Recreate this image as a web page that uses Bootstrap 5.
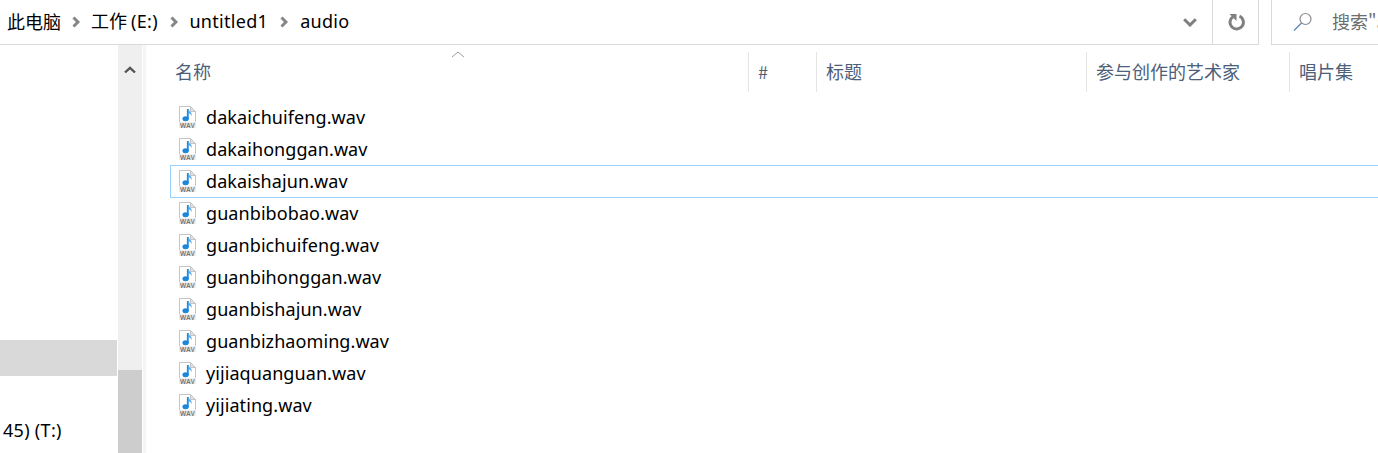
<!DOCTYPE html>
<html lang="zh-CN">
<head>
  <meta charset="UTF-8">
  <title>audio</title>
  <link href="https://cdn.jsdelivr.net/npm/bootstrap@5.3.3/dist/css/bootstrap.min.css" rel="stylesheet">
  <style>
    html, body { height: 453px; overflow: hidden; }
    body { background: #fff; color: #000; font-family: "Noto Sans CJK SC", sans-serif; font-size: 18px; line-height: 24px; }
    .latin { font-family: "Noto Sans", "Noto Sans CJK SC", sans-serif; letter-spacing: .08px; }
    .wide { letter-spacing: .3px; }
    .topbar { height: 45px; }
    .addr { width: 1259px; flex: none; border-right: 1px solid #d9d9d9; border-bottom: 1px solid #d9d9d9; }
    .crumbs { padding-left: 7px; padding-bottom: 3px; }
    .sep { width: 30px; padding-top: 3px; }
    .sep-b { width: 31.5px; }
    .sep-c { width: 32px; }
    .addr-btn { height: 44px; }
    .drop { width: 46px; border-right: 1px solid #d9d9d9; }
    .refresh { width: 45px; }
    .gapper { width: 12px; flex: none; }
    .searchbox { min-width: 0; border-left: 1px solid #d9d9d9; border-bottom: 1px solid #d9d9d9; color: #6d6d6d; padding-left: 20px; white-space: nowrap; overflow: hidden; }
    .searchbox svg { flex: none; }
    .searchbox span { margin-left: 20px; padding-bottom: 2px; }
    .body-wrap { height: 408px; }
    .tree { width: 118px; padding-top: 295px; }
    .tree-sel { height: 36px; width: 117px; background: #d9d9d9; }
    .tree-drive { height: 36px; margin-top: 36px; padding-left: 3px; line-height: 36px; white-space: nowrap; }
    .vscroll { width: 25px; background: #efefef; border-right: 1px solid #fff; }
    .vscroll-up { height: 44px; padding-top: 14px; margin-top: 7px; }
    .vscroll-gap { height: 274px; }
    .vscroll-thumb { background: #cdcdcd; width: 24px; }
    .split { width: 3px; background: #f5f5f5; }
    .listing { position: relative; }
    .colhead { height: 40px; margin-top: 7px; color: #4c607a; line-height: 39px; position: relative; }
    .colhead > div { border-right: 1px solid #e5e5e5; padding-left: 9px; white-space: nowrap; }
    .c-name { width: 603px; padding-left: 29px !important; }
    .c-num { width: 68px; }
    .c-title { width: 270px; }
    .c-artist { width: 203px; }
    .c-album { border-right: 0 !important; }
    .sort-arrow { position: absolute; left: 305px; top: -1px; }
    .files { margin-top: 9px; }
    .file-row { height: 32px; margin-left: 24px; padding-left: 7px; gap: 9px; border: 1px solid transparent; border-right: 0; }
    .file-row.on { border-color: #99d1ff; height: 33px; margin-bottom: -1px; padding-bottom: 1px; }
    .file-row span { padding-bottom: 1px; }
    .file-ico { width: 19px; height: 24px; flex: none; }
  </style>
</head>
<body>
  <div class="topbar d-flex">
    <div class="addr d-flex align-items-center">
      <div class="crumbs d-flex align-items-center flex-grow-1">
        <span>此电脑</span>
        <span class="sep d-flex justify-content-center">
          <svg width="8" height="12" viewBox="0 0 8 12"><path d="M1.500 1.500 6 6l-4.500 4.500" fill="none" stroke="#858585" stroke-width="3"/></svg>
        </span>
        <span>工作 <span class="latin wide">(E:)</span></span>
        <span class="sep sep-b d-flex justify-content-center">
          <svg width="8" height="12" viewBox="0 0 8 12"><path d="M1.500 1.500 6 6l-4.500 4.500" fill="none" stroke="#858585" stroke-width="3"/></svg>
        </span>
        <span class="latin wide">untitled1</span>
        <span class="sep sep-c d-flex justify-content-center">
          <svg width="8" height="12" viewBox="0 0 8 12"><path d="M1.500 1.500 6 6l-4.500 4.500" fill="none" stroke="#858585" stroke-width="3"/></svg>
        </span>
        <span class="latin wide">audio</span>
      </div>
      <div class="addr-btn drop d-flex align-items-center justify-content-center">
        <svg width="14" height="9" viewBox="0 0 14 9"><path d="M1.200 1.200 7 7l5.800-5.800" fill="none" stroke="#7f7f7f" stroke-width="3"/></svg>
      </div>
      <div class="addr-btn refresh d-flex align-items-center justify-content-center">
        <svg width="18" height="18" viewBox="0 0 18 18"><path d="M6 3.700A6.700 6.700 0 1 0 12.500 3.200" fill="none" stroke="#808080" stroke-width="3"/><path d="M2.500 1h7v7z" fill="#808080"/></svg>
      </div>
    </div>
    <div class="gapper"></div>
    <div class="searchbox flex-grow-1 d-flex align-items-center">
      <svg width="20" height="20" viewBox="0 0 20 20"><circle cx="13.500" cy="7" r="5.500" fill="none" stroke="#8a8a8a" stroke-width="1.200"/><path d="M9.500 11 2 18.500" stroke="#5f8bb8" stroke-width="1.400"/></svg>
      <span>搜索"a</span>
    </div>
  </div>

  <div class="body-wrap d-flex">
    <div class="tree">
      <div class="tree-sel"></div>
      <div class="tree-drive latin wide">45) (T:)</div>
    </div>
    <div class="vscroll d-flex flex-column">
      <div class="vscroll-up d-flex justify-content-center">
        <svg width="12" height="8" viewBox="0 0 12 8"><path d="M1 6.500 6 1.800l5 4.700" fill="none" stroke="#555" stroke-width="2.400"/></svg>
      </div>
      <div class="vscroll-gap"></div>
      <div class="vscroll-thumb flex-grow-1"></div>
    </div>
    <div class="split"></div>
    <div class="listing flex-grow-1 overflow-hidden">
      <div class="colhead d-flex">
        <div class="c-name">名称</div>
        <div class="c-num">#</div>
        <div class="c-title">标题</div>
        <div class="c-artist">参与创作的艺术家</div>
        <div class="c-album">唱片集</div>
        <svg class="sort-arrow" width="14" height="7" viewBox="0 0 14 7"><path d="M1 6l6-5 6 5" fill="none" stroke="#9a9a9a"/></svg>
      </div>
      <div class="files" id="files"></div>
    </div>
  </div>

  <script>
    const arquivos = ["dakaichuifeng.wav", "dakaihonggan.wav", "dakaishajun.wav", "guanbibobao.wav", "guanbichuifeng.wav",
      "guanbihonggan.wav", "guanbishajun.wav", "guanbizhaoming.wav", "yijiaquanguan.wav", "yijiating.wav"];
    const icone = `<svg class="file-ico" viewBox="0 0 19 24">
      <path d="M1.500 1.500h11l5 5v16h-16z" fill="#fff" stroke="#c4c4c4"/>
      <path d="M12.500 1.500v5h5z" fill="#e2e2e2" stroke="#c4c4c4"/>
      <path d="M9.800 4v10" stroke="#1c86dc" stroke-width="1.800" fill="none"/>
      <path d="M10.500 4c.5 2.800 3.800 3.200 3.200 7-.6-1.800-2-2.600-3.200-2.800z" fill="#4aa8ec"/>
      <ellipse cx="7.600" cy="13.800" rx="3.200" ry="2.500" fill="#1c86dc"/>
      <rect x="1" y="17" width="17" height="6" fill="#eee"/>
      <text x="9.500" y="22.600" text-anchor="middle" font-family="Liberation Sans, sans-serif" font-size="6.500" font-weight="700" letter-spacing=".3" fill="#777">WAV</text>
    </svg>`;
    document.getElementById("files").innerHTML = arquivos.map((nome, i) => `
      <div class="file-row d-flex align-items-center${i === 2 ? " on" : ""}">
        ${icone}
        <span class="latin">${nome}</span>
      </div>`).join("");
  </script>
</body>
</html>
